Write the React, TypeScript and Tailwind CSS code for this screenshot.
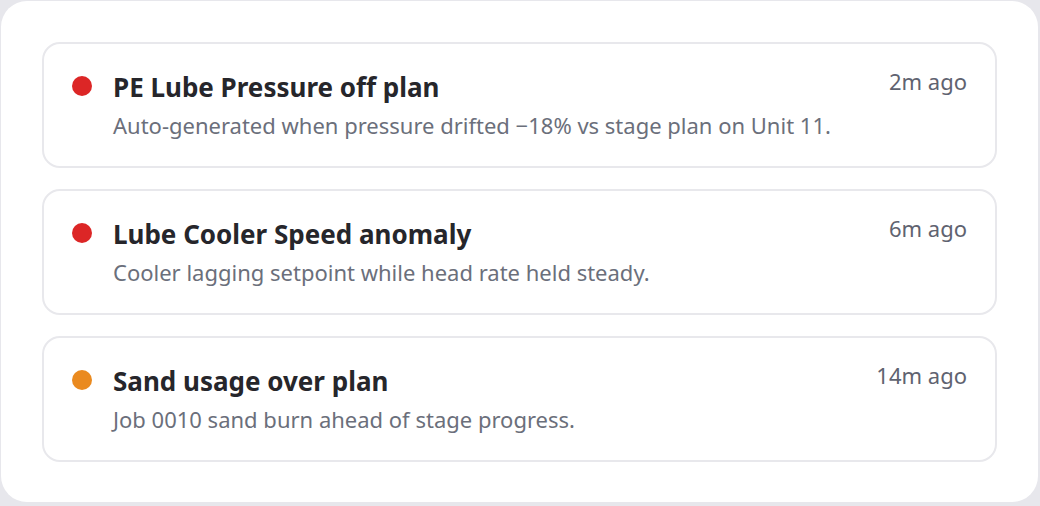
const alerts = [
  {
    title: "PE Lube Pressure off plan",
    detail: "Auto-generated when pressure drifted \u221218% vs stage plan on Unit 11.",
    time: "2m ago",
    dot: "bg-[#dc2626]",
  },
  {
    title: "Lube Cooler Speed anomaly",
    detail: "Cooler lagging setpoint while head rate held steady.",
    time: "6m ago",
    dot: "bg-[#dc2626]",
  },
  {
    title: "Sand usage over plan",
    detail: "Job 0010 sand burn ahead of stage progress.",
    time: "14m ago",
    dot: "bg-[#ea8a1f]",
  },
];

export default function App() {
  return (
    <div
      className="w-[1040px] h-[506px] bg-[#e7e7ec] p-[1px] pb-[4px] pr-[2px]"
      style={{ fontFamily: '"Noto Sans", "Open Sans", sans-serif' }}
    >
      <div className="h-full rounded-[26px] bg-white px-[41px] pt-[41px] flex flex-col gap-[21px]">
        {alerts.map((a) => (
          <div
            key={a.title}
            className="h-[126px] rounded-[18px] border-2 border-[#e8e8ec] px-[28px] pt-[22px] flex items-start"
          >
            <span className={`mt-[10px] h-[20px] w-[20px] shrink-0 rounded-full ${a.dot}`} />
            <div className="ml-[21px] flex-1 pt-[4px]">
              <div className="text-[26px] leading-[34px] font-bold text-[#26262b]">{a.title}</div>
              <div className="mt-[6px] text-[22px] leading-[30px] text-[#6b6f7b]">{a.detail}</div>
            </div>
            <div className="text-[22px] leading-[30px] text-[#5f6370]">{a.time}</div>
          </div>
        ))}
      </div>
    </div>
  );
}
